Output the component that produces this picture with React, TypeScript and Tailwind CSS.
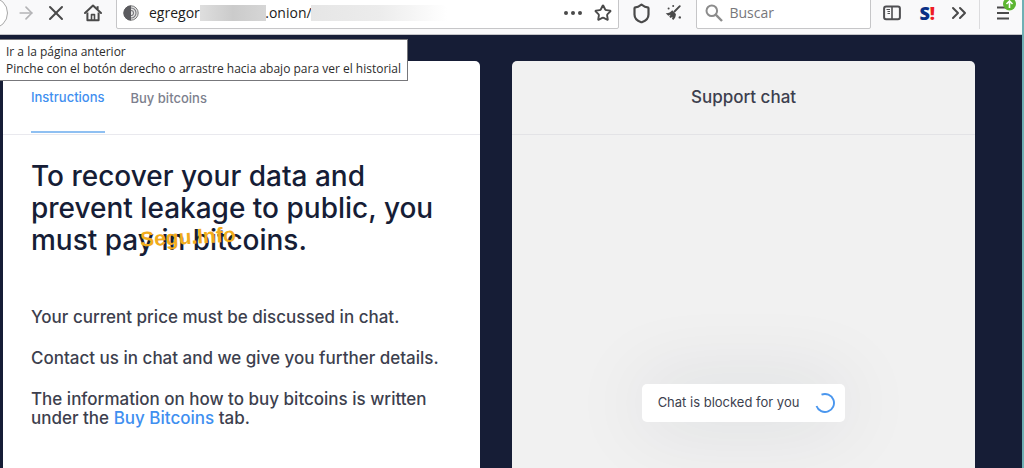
import React, { useState } from 'react';
import { ArrowRight, X, Shield, Star, Search, ChevronsRight } from 'lucide-react';

const UI_FONT = "font-['Open_Sans','Noto_Sans',sans-serif]";

const HomeIcon = () => (
  <svg width="18" height="18" viewBox="0 0 18 18" fill="none" stroke="#4a4a4a" strokeWidth="2" strokeLinejoin="round">
    <path d="M1 9 9 1.6 17 9" strokeLinecap="round" />
    <path d="M13.6 5V2.2" />
    <path d="M3.4 8.5v7.7h11.2V8.5" />
    <path d="M7.5 16v-5.4h3V16" strokeWidth="1.6" />
  </svg>
);

const OnionIcon = () => (
  <svg width="16" height="16" viewBox="0 0 16 16" fill="none" className="shrink-0">
    <circle cx="8" cy="8" r="7.2" fill="#e4e4e4" stroke="#777" />
    <path d="M8 .5a7.5 7.5 0 0 0 0 15z" fill="#5b5b5f" />
    <path d="M8 3a5 5 0 0 1 0 10M8 5.5a2.5 2.5 0 0 1 0 5" stroke="#77777b" strokeWidth="1.1" />
  </svg>
);

const BroomIcon = () => (
  <svg width="18" height="18" viewBox="0 0 18 18" fill="#4a4a4a">
    <path d="M15.8 2.2 10.5 7.5" stroke="#4a4a4a" strokeWidth="1.9" strokeLinecap="round" />
    <path d="M8.2 6.2 11.900 9.900c0 2.500-1 4.600-2.700 6.100l-1.200-1.200.6-2-2 1.300-1.300-1.300 1.300-2.100-2.300 1.100L1.700 9.200c2.600.2 4.900-.7 6.500-3z" />
    <circle cx="4.600" cy="4.600" r="1" />
    <circle cx="9.200" cy="2" r="1" />
    <circle cx="15.800" cy="13.400" r="1.200" />
  </svg>
);

const SidebarIcon = () => (
  <svg width="18" height="16" viewBox="0 0 18 16" fill="none" stroke="#4f4f52">
    <rect x="1.1" y="1.5" width="15.8" height="12.8" rx="2" strokeWidth="2" />
    <path d="M9 2v12" strokeWidth="1.6" />
    <path d="M3.500 4.500h3.500M4.500 6.500H7M4.500 8.500H7" />
  </svg>
);

const SearchIcon = () => (
  <svg width="18" height="18" viewBox="0 0 18 18" fill="none" stroke="#8c8c8c" strokeWidth="2" className="shrink-0">
    <circle cx="6.8" cy="6.8" r="5.300" />
    <path d="m10.700 10.700 6.300 6.300" strokeWidth="2.400" />
  </svg>
);

const MenuIcon = () => (
  <svg width="20" height="26" viewBox="0 0 20 26" fill="none">
    <path d="M1 7.500h12M1 13h12M1 18.500h12" stroke="#4a4a4a" strokeWidth="2" />
    <circle cx="13.500" cy="4" r="6.500" fill="#5cb531" />
    <path d="M13.500 8V1.500M10.500 4l3-3 3 3" stroke="#fff" strokeWidth="1.600" />
  </svg>
);

const Toolbar: React.FC = () => {
  const [url, setUrl] = useState(`egregor${' '.repeat(18)}.onion/`);
  const [query, setQuery] = useState('');

  return (
    <header className={`flex h-[35px] items-center overflow-hidden border-b border-[#c4c4c8] bg-[#f9f9fa] pb-2 ${UI_FONT}`}>
      <button aria-label="Atrás" className="-ml-6 size-8 shrink-0 rounded-full border border-[#a8a8a8] bg-white" />
      <button aria-label="Adelante" className="ml-2 text-[#b4b4b6]"><ArrowRight size={20} /></button>
      <button aria-label="Detener" className="ml-2 text-[#4a4a4a]"><X size={24} /></button>
      <button aria-label="Inicio" className="ml-4"><HomeIcon /></button>

      {/* Address bar */}
      <div className="relative ml-3.5 flex h-8 min-w-0 flex-1 items-center rounded-xs border border-[#c6c6c8] bg-white px-1.5">
        <OnionIcon />
        <input
          aria-label="Dirección"
          value={url}
          onChange={e => setUrl(e.target.value)}
          className="ml-2.5 min-w-0 flex-1 text-sm text-[#1c1c20] outline-none"
        />
        <span className="absolute left-[83px] h-4 w-[66px] bg-linear-to-r from-[#dedede] via-[#cbcbcb] to-[#d6d6d6]" />
        <span className="absolute left-[194px] h-4 w-[136px] bg-linear-to-r from-[#e6e6e6] via-[#ececec] to-white" />
        <button aria-label="Acciones" className="flex gap-[3px] px-3">
          <i className="size-1 rounded-full bg-[#4a4a4a]" />
          <i className="size-1 rounded-full bg-[#4a4a4a]" />
          <i className="size-1 rounded-full bg-[#4a4a4a]" />
        </button>
        <button aria-label="Marcador" className="text-[#4a4a4a]"><Star size={18} strokeWidth={2.5} /></button>
      </div>

      <button aria-label="Seguridad" className="ml-3 text-[#4a4a4a]"><Shield size={21} strokeWidth={2.5} /></button>
      <button aria-label="Nueva identidad" className="ml-3"><BroomIcon /></button>

      <div className="ml-3.5 flex h-8 w-[175px] items-center gap-1.5 rounded-xs border border-[#c6c6c8] bg-white px-2">
        <SearchIcon />
        <input
          aria-label="Buscar"
          placeholder="Buscar"
          value={query}
          onChange={e => setQuery(e.target.value)}
          className="w-full min-w-0 text-sm outline-none placeholder:text-[#77777b]"
        />
      </div>

      <button aria-label="Barra lateral" className="ml-3"><SidebarIcon /></button>
      <button aria-label="NoScript" className="ml-4.5 flex text-lg leading-5 font-extrabold text-[#0b2f86]">
        S<span className="text-[#ee1c25]">!</span>
      </button>
      <button aria-label="Más herramientas" className="ml-3 text-[#4a4a4a]"><ChevronsRight size={24} /></button>
      <span className="ml-2 h-8 w-px bg-[#dcdcde]" />
      <button aria-label="Menú" className="mr-1.5 ml-4"><MenuIcon /></button>
    </header>
  );
};

const App: React.FC = () => {
  return (
    <div className="relative flex min-h-screen flex-col border-r-2 border-[#6fb0b4] bg-[#161d36]">
      <Toolbar />

      {/* Back button tooltip */}
      <div
        role="tooltip"
        className={`absolute top-[39px] left-0 z-10 border border-l-0 border-[#77777b] bg-white px-1.5 py-[3px] text-xs leading-[17px] whitespace-nowrap text-[#2c2c2c] ${UI_FONT}`}
      >
        <p>Ir a la página anterior</p>
        <p>Pinche con el botón derecho o arrastre hacia abajo para ver el historial</p>
      </div>

      <main className="grid flex-1 grid-cols-[477fr_463fr] gap-8 pt-[26px] pr-[47px] pl-[3px] font-['Inter',sans-serif]">
        <section className="rounded-t-[5px] bg-white">
          <nav className="flex h-[74px] gap-[26px] border-b border-[#e9e9ee] px-7 text-[13px] font-medium">
            <a href="#instructions" className="flex h-[72px] items-center border-b-2 border-[#8fc0f2] pt-[3px] text-[#3f8ff0]">Instructions</a>
            <a href="#buy" className="flex h-[72px] items-center pt-[3px] text-[#7d7f8e]">Buy bitcoins</a>
          </nav>

          <div className="px-7 pt-[25px] text-[17px] leading-[19px] font-medium text-[#3d3f4e]">
            <div className="relative">
              <h1 className="text-[28px] leading-8 font-medium text-[#161d36]">
                To recover your data and prevent leakage to public, you must pay in bitcoins.
              </h1>
              <span className="absolute top-[65px] left-[109px] -rotate-3 font-['Liberation_Sans',sans-serif] text-[21px] leading-6 font-bold text-[#f2ac1c]">
                Segu.Info
              </span>
            </div>
            <p className="mt-[52px]">Your current price must be discussed in chat.</p>
            <p className="mt-[22px]">Contact us in chat and we give you further details.</p>
            <p className="mt-[22px]">
              The information on how to buy bitcoins is written under the{' '}
              <a href="#buy" className="text-[#3f8ff0]">Buy Bitcoins</a> tab.
            </p>
          </div>
        </section>

        <section className="flex flex-col items-center rounded-t-[5px] bg-[#f1f1f1]">
          <h2 className="flex h-[74px] w-full items-center justify-center border-b border-[#e3e3e6] text-[17px] font-medium text-[#3d3f4e]">
            Support chat
          </h2>
          <div className="mt-[249px] flex h-[38px] items-center gap-4 rounded-[5px] bg-white pr-2.5 pl-4 text-[13px] text-[#3d3f4e] shadow-[0_0_80px_rgba(22,29,54,0.12)]">
            Chat is blocked for you
            <svg width="20" height="20" viewBox="0 0 20 20" fill="none">
              <path d="M6.500 1.700A9 9 0 1 1 1.500 13" stroke="#4a96ee" strokeWidth="1.900" />
            </svg>
          </div>
        </section>
      </main>
    </div>
  );
};

export default App;
